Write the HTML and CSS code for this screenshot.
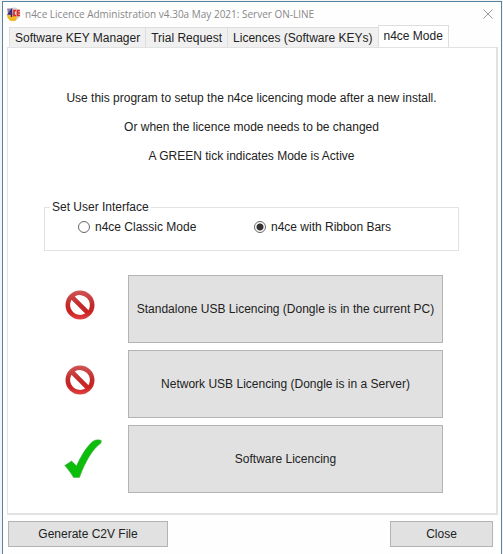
FILE: index.html
```html
<!DOCTYPE html>
<html lang="en">

<head>
    <meta charset="UTF-8">
    <title>n4ce Licence Administration</title>
    <link rel="stylesheet" href="styles.css">
</head>

<body>
    <main class="window">
        <header class="titlebar">
            <svg class="logo" viewBox="0 0 14 14" aria-hidden="true">
                <circle cx="7" cy="7" r="6.500" fill="#d8d2d6" />
                <path d="M0 8a6 6 0 0 0 9 5.500L10 9z" fill="#f2b822" />
                <path d="M0 1.500h5v3l-4 2z" fill="#8d7fa8" />
                <path d="M4.500 10V3L1.500 7h4" fill="none" stroke="#35276b" stroke-width="1.500" />
                <path d="M9 3.500H7v5h2M13 3.500h-2.500v5H13M10.500 6H13" fill="none" stroke="#df2723" stroke-width="1.700" />
            </svg>
            <h1>n4ce Licence Administration v4.30a May 2021: Server ON-LINE</h1>
            <button class="luk" type="button" aria-label="Close window">
                <svg viewBox="0 0 10 10"><path d="M.5.5l9 9M9.5.5l-9 9" fill="none" stroke="#999" /></svg>
            </button>
        </header>

        <nav class="tabs" role="tablist">
            <button type="button" role="tab" aria-selected="false">Software KEY Manager</button>
            <button type="button" role="tab" aria-selected="false">Trial Request</button>
            <button type="button" role="tab" aria-selected="false">Licences (Software KEYs)</button>
            <button class="active" type="button" role="tab" aria-selected="true">n4ce Mode</button>
        </nav>

        <section class="panel">
            <div class="intro">
                <p>Use this program to setup the n4ce licencing mode after a new install.</p>
                <p>Or when the licence mode needs to be changed</p>
                <p>A GREEN tick indicates Mode is Active</p>
            </div>

            <fieldset class="interface">
                <legend>Set User Interface</legend>
                <div class="choices">
                    <label><input type="radio" name="interface" value="classic">n4ce Classic Mode</label>
                    <label><input type="radio" name="interface" value="ribbon" checked>n4ce with Ribbon Bars</label>
                </div>
            </fieldset>

            <div class="modes">
                <div class="mode">
                    <svg class="stop" viewBox="0 0 30 30" role="img" aria-label="Not active">
                        <defs>
                            <linearGradient id="red" x1="0" y1="0" x2="0" y2="1">
                                <stop offset="0" stop-color="#cf5656" />
                                <stop offset=".5" stop-color="#c32a2a" />
                                <stop offset=".75" stop-color="#cc2222" />
                                <stop offset="1" stop-color="#e04444" />
                            </linearGradient>
                        </defs>
                        <path fill="url(#red)" fill-rule="evenodd" d="M15 .5a14.500 14.500 0 1 0 0 29a14.500 14.500 0 1 0 0-29zM9.800 6.500a10 10 0 0 1 13.700 13.700zM6.500 9.800a10 10 0 0 0 13.700 13.700z" />
                    </svg>
                    <button class="btn" type="button">Standalone USB Licencing (Dongle is in the current PC)</button>
                </div>
                <div class="mode">
                    <svg class="stop" viewBox="0 0 30 30" role="img" aria-label="Not active">
                        <path fill="url(#red)" fill-rule="evenodd" d="M15 .5a14.500 14.500 0 1 0 0 29a14.500 14.500 0 1 0 0-29zM9.800 6.500a10 10 0 0 1 13.700 13.700zM6.500 9.800a10 10 0 0 0 13.700 13.700z" />
                    </svg>
                    <button class="btn" type="button">Network USB Licencing (Dongle is in a Server)</button>
                </div>
                <div class="mode">
                    <svg class="tick" viewBox="0 0 38 40" role="img" aria-label="Active">
                        <path fill="#0cbd0c" stroke="#4aa84a" stroke-width=".5" d="M.7 26.500L7.500 22L12.500 26.800C17 17 22 8.500 28 3C31 .5 34.500 .3 37.300 1.500L37 4C29 9.500 21 23 15.500 38.500H9.500C7 34 4 30 .7 26.500z" />
                    </svg>
                    <button class="btn" type="button">Software Licencing</button>
                </div>
            </div>
        </section>

        <footer class="actions">
            <button class="btn generate" type="button">Generate C2V File</button>
            <button class="btn close" type="button">Close</button>
        </footer>
    </main>
</body>

</html>
```
FILE: styles.css
```css
* {
    box-sizing: border-box;
}

body {
    margin: 0;
    padding: 1px 1px 0 2px;
    background-color: #f4f4f4;
    font-family: "Liberation Sans", Arial, sans-serif;
    font-size: 12px;
    color: #222;
}

button {
    font: inherit;
    color: inherit;
}

.window {
    display: flex;
    flex-direction: column;
    min-height: calc(100vh - 1px);
    padding: 0 3px 7px 4px;
    border: 1px solid #55849f;
    border-bottom: 0;
    background-color: #fefefe;
}

.titlebar {
    display: flex;
    align-items: center;
    height: 23px;
    padding-right: 5px;
}

.logo {
    width: 14px;
    height: 14px;
}

h1 {
    flex: 1;
    margin: 0 0 0 4px;
    font-family: "Open Sans", "Noto Sans", sans-serif;
    font-size: 10px;
    font-weight: normal;
    white-space: nowrap;
    color: #888;
}

.luk {
    display: flex;
    padding: 0;
    border: 0;
    background: none;
}

.luk svg {
    width: 10px;
    height: 10px;
}

.tabs {
    display: flex;
    align-items: flex-end;
    height: 22px;
    padding-left: 2px;
}

.tabs button {
    height: 20px;
    padding: 0 5px;
    border: 1px solid #dedede;
    border-width: 1px 0 0 1px;
    background-color: #f0f0f0;
    white-space: nowrap;
}

.tabs .active {
    height: 23px;
    margin-bottom: -1px;
    padding: 0 5px 3px;
    border-right-width: 1px;
    background-color: #fff;
}

.panel {
    flex: 1;
    padding: 42px 37px 20px 36px;
    border: 1px solid #e2e2e2;
    border-width: 1px 2px 2px 1px;
    background-color: #fff;
}

.intro {
    text-align: center;
}

.intro p {
    margin: 0 0 13px;
    line-height: 16px;
    white-space: nowrap;
}

.interface {
    margin: 36px 0 0;
    padding: 0;
    border: 1px solid #e2e2e2;
}

legend {
    margin-left: 5px;
    padding: 0 2px;
    line-height: 14px;
}

.choices {
    display: grid;
    grid-template-columns: 176px 1fr;
    height: 36px;
    padding: 6px 0 0 33px;
    align-items: start;
}

.choices label {
    display: flex;
    align-items: center;
    gap: 5px;
    line-height: 14px;
}

.choices input {
    appearance: none;
    width: 12px;
    height: 12px;
    margin: 0;
    border: 1px solid #666;
    border-radius: 50%;
    background-color: #fff;
}

.choices input:checked {
    background-image: radial-gradient(circle, #333 3px, transparent 4px);
}

.modes {
    display: grid;
    gap: 7px;
    margin: 24px 16px 0 0;
}

.mode {
    display: grid;
    grid-template-columns: 72px 1fr;
    gap: 12px;
    align-items: center;
}

.stop {
    width: 30px;
    height: 30px;
    margin-bottom: 8px;
    justify-self: center;
}

.tick {
    width: 38px;
    height: 40px;
    margin-left: 20px;
}

.btn {
    padding: 0;
    border: 1px solid #b4b4b4;
    background-color: #e1e1e1;
}

.mode .btn {
    height: 68px;
}

.actions {
    display: flex;
    justify-content: space-between;
    padding: 6px 5px 0 1px;
}

.actions .btn {
    height: 26px;
}

.generate {
    width: 160px;
}

.close {
    width: 103px;
}
```
